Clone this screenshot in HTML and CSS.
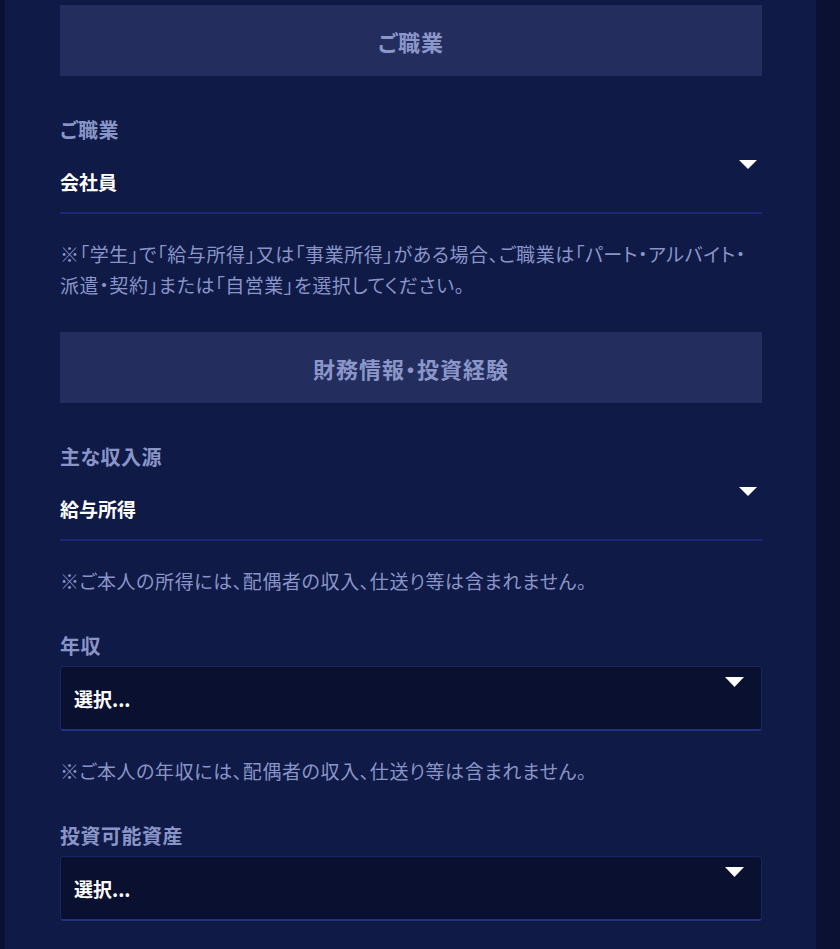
FILE: index.html
```html
<!DOCTYPE html>
<html lang="ja">
<head>
  <meta charset="UTF-8">
  <title>お客様情報</title>
  <link rel="stylesheet" href="styles.css">
</head>
<body>
  <div class="panel">
    <h2 class="section-title">ご職業</h2>

    <div class="field">
      <label class="field-label" for="job">ご職業</label>
      <div class="select plain">
        <span class="select-value" id="job">会社員</span>
        <svg class="arrow" width="18" height="9" viewBox="0 0 18 9"><path d="M0 0H18L9 9Z" fill="#fff"/></svg>
      </div>
    </div>
    <p class="note">※「学生」で「給与所得」又は「事業所得」がある場合、ご職業は「パート・アルバイト・派遣・契約」または「自営業」を選択してください。</p>

    <h2 class="section-title">財務情報・投資経験</h2>

    <div class="field">
      <label class="field-label" for="income-source">主な収入源</label>
      <div class="select plain">
        <span class="select-value" id="income-source">給与所得</span>
        <svg class="arrow" width="18" height="9" viewBox="0 0 18 9"><path d="M0 0H18L9 9Z" fill="#fff"/></svg>
      </div>
    </div>
    <p class="note">※ご本人の所得には、配偶者の収入、仕送り等は含まれません。</p>

    <div class="field">
      <label class="field-label" for="income">年収</label>
      <div class="select boxed">
        <span class="select-value" id="income">選択...</span>
        <svg class="arrow" width="19" height="10" viewBox="0 0 19 10"><path d="M0 0H19L9.5 10Z" fill="#fff"/></svg>
      </div>
    </div>
    <p class="note">※ご本人の年収には、配偶者の収入、仕送り等は含まれません。</p>

    <div class="field">
      <label class="field-label" for="assets">投資可能資産</label>
      <div class="select boxed">
        <span class="select-value" id="assets">選択...</span>
        <svg class="arrow" width="19" height="10" viewBox="0 0 19 10"><path d="M0 0H19L9.5 10Z" fill="#fff"/></svg>
      </div>
    </div>
  </div>
</body>
</html>
```

FILE: styles.css
```css
body { margin: 0; background: #0a1133; font-family: "Noto Sans CJK JP", "Noto Sans", sans-serif; color: #fff; }
.panel { width: 811px; margin-left: 5px; padding: 5px 54px 40px 55px; background: #0f1a47; min-height: 949px; box-sizing: border-box; }
.section-title { margin: 0; height: 71px; display: flex; align-items: center; justify-content: center; background: #232e5e; color: #8b96c9; font-size: 22px; font-weight: 700; letter-spacing: 1px; font-feature-settings: "palt"; }
.field { margin-top: 40px; }
.field-label { display: block; font-size: 20px; line-height: 28px; font-weight: 700; color: #8a95c7; letter-spacing: 0.5px; font-feature-settings: "palt"; }
.select { position: relative; display: flex; align-items: center; height: 62px; margin-top: 6px; }
.select-value { font-size: 19px; font-weight: 700; color: #fff; }
.select.plain { border-bottom: 2px solid #1c2877; }
.select.boxed { padding-left: 13px; background: #0a1030; border: 1px solid #19245f; border-bottom: 2px solid #21307f; border-radius: 3px; }
.arrow { position: absolute; top: 10px; right: 5px; }
.select.boxed .arrow { right: 17px; }
.note { margin: 24px 0 0; font-size: 19px; line-height: 31px; color: #8a95c7; letter-spacing: 0.6px; font-feature-settings: "palt"; }
.note + .section-title { margin-top: 32px; }
.note + .field { margin-top: 36px; }
```
